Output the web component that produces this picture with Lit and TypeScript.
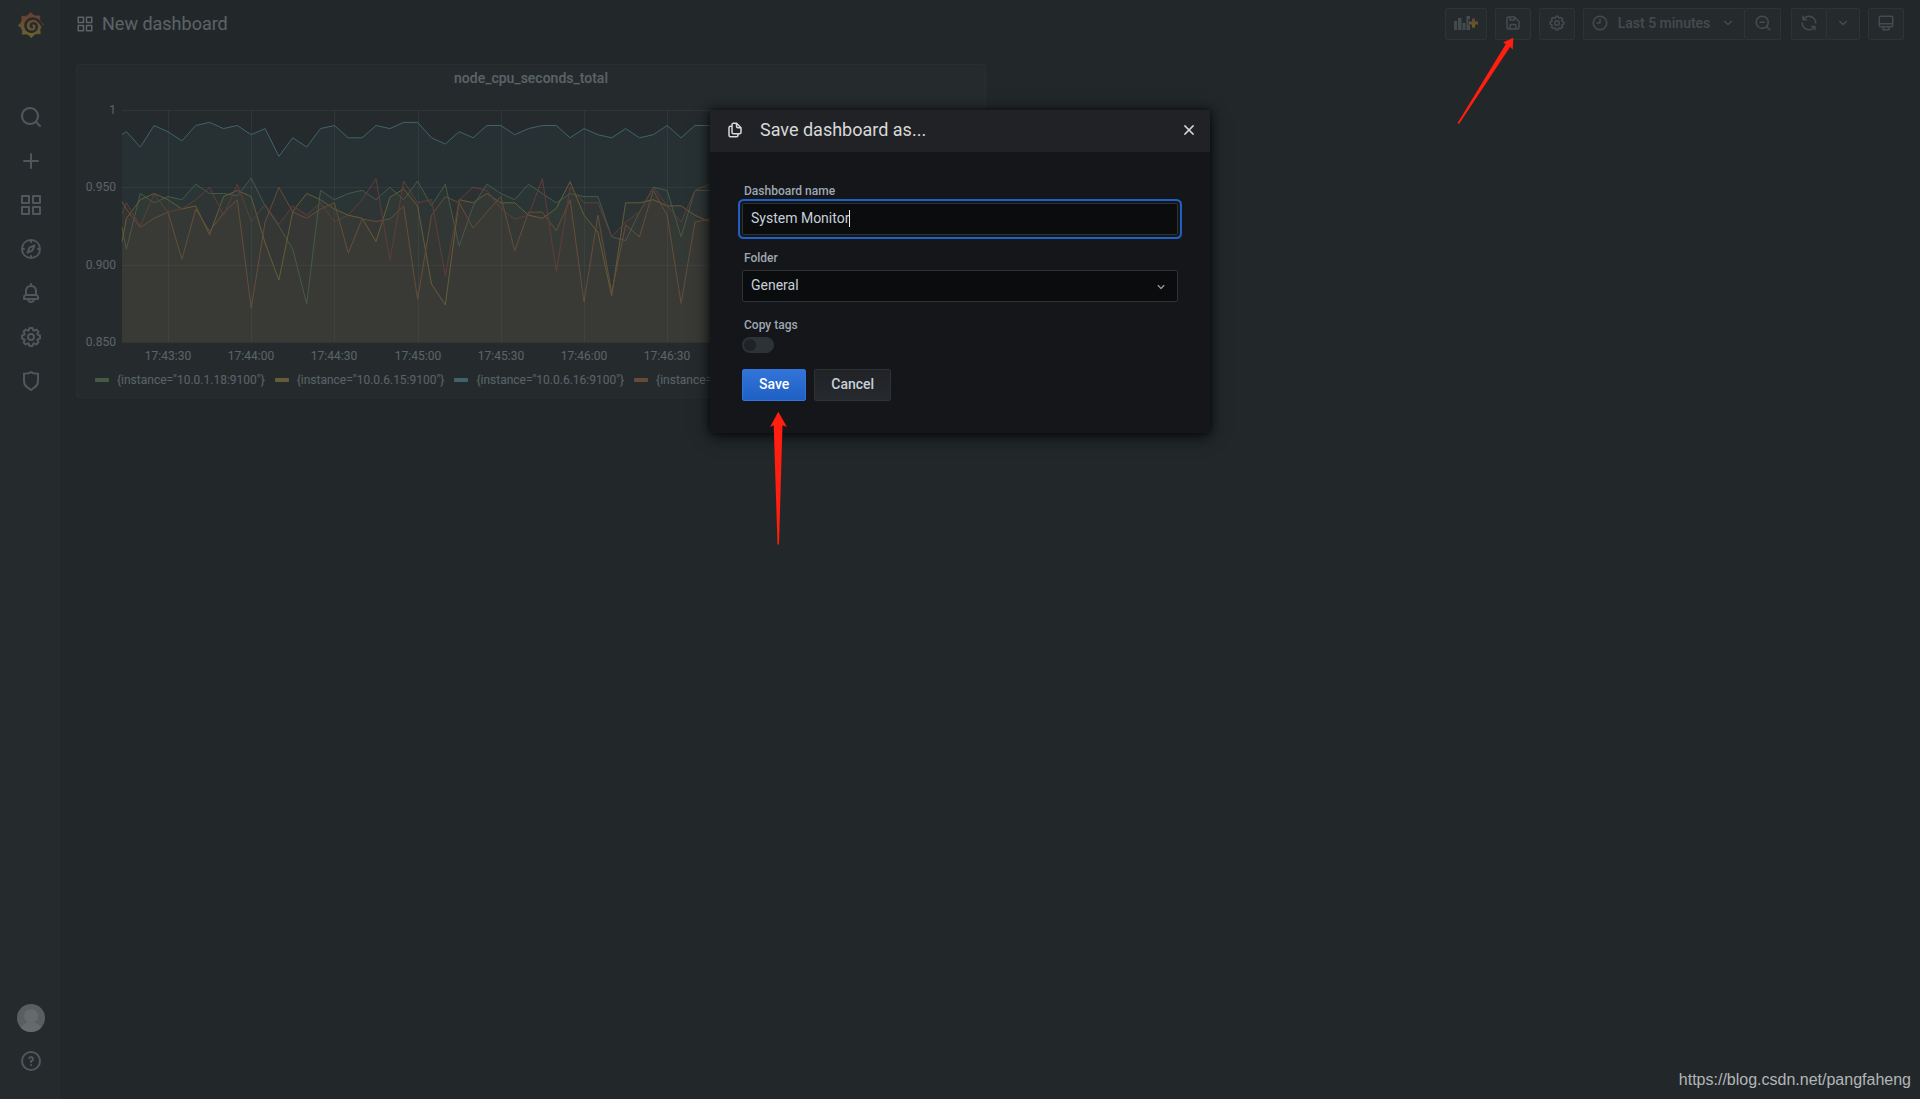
import { LitElement, html, css, svg } from "lit";
import { customElement, property, state } from "lit/decorators.js";

const ICONS: Record<string, string> = {
  search: "M21.71,20.29,18,16.61A9,9,0,1,0,16.61,18l3.68,3.68a1,1,0,0,0,1.42,0A1,1,0,0,0,21.71,20.29ZM11,18a7,7,0,1,1,7-7A7,7,0,0,1,11,18Z",
  "search-minus": "M21.71,20.29,18,16.61A9,9,0,1,0,16.61,18l3.68,3.68a1,1,0,0,0,1.42,0A1,1,0,0,0,21.71,20.29ZM11,18a7,7,0,1,1,7-7A7,7,0,0,1,11,18ZM14,10H8a1,1,0,0,0,0,2h6a1,1,0,0,0,0-2Z",
  plus: "M19,11H13V5a1,1,0,0,0-2,0v6H5a1,1,0,0,0,0,2h6v6a1,1,0,0,0,2,0V13h6a1,1,0,0,0,0-2Z",
  apps: "M10,13H3a1,1,0,0,0-1,1v7a1,1,0,0,0,1,1h7a1,1,0,0,0,1-1V14A1,1,0,0,0,10,13ZM9,20H4V15H9ZM21,2H14a1,1,0,0,0-1,1v7a1,1,0,0,0,1,1h7a1,1,0,0,0,1-1V3A1,1,0,0,0,21,2ZM20,9H15V4h5Zm1,4H14a1,1,0,0,0-1,1v7a1,1,0,0,0,1,1h7a1,1,0,0,0,1-1V14A1,1,0,0,0,21,13Zm-1,7H15V15h5ZM10,2H3A1,1,0,0,0,2,3v7a1,1,0,0,0,1,1h7a1,1,0,0,0,1-1V3A1,1,0,0,0,10,2ZM9,9H4V4H9Z",
  compass: "M12,2A10,10,0,1,0,22,12,10,10,0,0,0,12,2Zm1,17.93V19a1,1,0,0,0-2,0v.93A8,8,0,0,1,4.07,13H5a1,1,0,0,0,0-2H4.07A8,8,0,0,1,11,4.07V5a1,1,0,0,0,2,0V4.07A8,8,0,0,1,19.93,11H19a1,1,0,0,0,0,2h.93A8,8,0,0,1,13,19.93ZM15.14,7.55l-5,2.12a1,1,0,0,0-.52.52l-2.12,5a1,1,0,0,0,.21,1.1,1,1,0,0,0,.7.3.93.93,0,0,0,.4-.09l5-2.12a1,1,0,0,0,.52-.52l2.12-5a1,1,0,0,0-1.31-1.31Zm-2.49,5.1-2.28,1,1-2.28,2.28-1Z",
  bell: "M18,13.18V10a6,6,0,0,0-5-5.91V3a1,1,0,0,0-2,0V4.09A6,6,0,0,0,6,10v3.18A3,3,0,0,0,4,16v2a1,1,0,0,0,1,1H8.14a4,4,0,0,0,7.72,0H19a1,1,0,0,0,1-1V16A3,3,0,0,0,18,13.18ZM8,10a4,4,0,0,1,8,0v3H8Zm4,10a2,2,0,0,1-1.72-1h3.44A2,2,0,0,1,12,20Zm6-3H6V16a1,1,0,0,1,1-1H17a1,1,0,0,1,1,1Z",
  cog: "M21.32,9.55l-1.89-.63.89-1.78A1,1,0,0,0,20.13,6L18,3.87a1,1,0,0,0-1.15-.19l-1.78.89-.63-1.89A1,1,0,0,0,13.5,2h-3a1,1,0,0,0-.95.68L8.92,4.57,7.14,3.68A1,1,0,0,0,6,3.87L3.87,6a1,1,0,0,0-.19,1.15l.89,1.78-1.89.63A1,1,0,0,0,2,10.5v3a1,1,0,0,0,.68.95l1.89.63-.89,1.78A1,1,0,0,0,3.87,18L6,20.13a1,1,0,0,0,1.15.19l1.78-.89.63,1.89a1,1,0,0,0,.95.68h3a1,1,0,0,0,.95-.68l.63-1.89,1.78.89A1,1,0,0,0,18,20.13L20.13,18a1,1,0,0,0,.19-1.15l-.89-1.78,1.89-.63A1,1,0,0,0,22,13.5v-3A1,1,0,0,0,21.32,9.55ZM20,12.78l-1.2.4A2,2,0,0,0,17.64,16l.57,1.14-1.1,1.1L16,17.64a2,2,0,0,0-2.79,1.16l-.4,1.2H11.22l-.4-1.2A2,2,0,0,0,8,17.64l-1.14.57-1.1-1.1L6.36,16A2,2,0,0,0,5.2,13.18L4,12.78V11.22l1.2-.4A2,2,0,0,0,6.36,8L5.79,6.89l1.1-1.1L8,6.36A2,2,0,0,0,10.82,5.2l.4-1.2h1.56l.4,1.2A2,2,0,0,0,16,6.36l1.14-.57,1.1,1.1L17.64,8a2,2,0,0,0,1.16,2.79l1.2.4ZM12,8a4,4,0,1,0,4,4A4,4,0,0,0,12,8Zm0,6a2,2,0,1,1,2-2A2,2,0,0,1,12,14Z",
  shield: "M19.63,3.65a1,1,0,0,0-.84-.2,8,8,0,0,1-6.22-1.27,1,1,0,0,0-1.14,0A8,8,0,0,1,5.21,3.45a1,1,0,0,0-.84.2A1,1,0,0,0,4,4.43v7.45a9,9,0,0,0,3.77,7.33l3.65,2.6a1,1,0,0,0,1.16,0l3.65-2.6A9,9,0,0,0,20,11.88V4.43A1,1,0,0,0,19.63,3.65ZM18,11.88a7,7,0,0,1-2.93,5.7L12,19.77,8.93,17.58A7,7,0,0,1,6,11.88V5.58a10,10,0,0,0,6-1.39,10,10,0,0,0,6,1.39Z",
  help: "M11.29,15.29a1.58,1.58,0,0,0-.12.15.76.76,0,0,0-.09.18.64.64,0,0,0-.06.18,1.36,1.36,0,0,0,0,.2.84.84,0,0,0,.08.38.9.9,0,0,0,.54.54.94.94,0,0,0,.76,0,.9.9,0,0,0,.54-.54A1,1,0,0,0,13,16a1,1,0,0,0-.29-.71A1,1,0,0,0,11.29,15.29ZM12,2A10,10,0,1,0,22,12,10,10,0,0,0,12,2Zm0,18a8,8,0,1,1,8-8A8,8,0,0,1,12,20ZM12,7A3,3,0,0,0,9.4,8.5a1,1,0,1,0,1.73,1A1,1,0,0,1,12,9a1,1,0,0,1,0,2,1,1,0,0,0-1,1v1a1,1,0,0,0,2,0v-.18A3,3,0,0,0,12,7Z",
  save: "M20.71,9.29l-6-6a1,1,0,0,0-.32-.21A1.09,1.09,0,0,0,14,3H6A3,3,0,0,0,3,6V18a3,3,0,0,0,3,3H18a3,3,0,0,0,3-3V10A1,1,0,0,0,20.71,9.29ZM9,5h4V7H9Zm6,14H9V16a1,1,0,0,1,1-1h4a1,1,0,0,1,1,1Zm4-1a1,1,0,0,1-1,1H17V16a3,3,0,0,0-3-3H10a3,3,0,0,0-3,3v3H6a1,1,0,0,1-1-1V6A1,1,0,0,1,6,5H7V8A1,1,0,0,0,8,9h6a1,1,0,0,0,1-1V6.41l4,4Z",
  clock: "M12,2A10,10,0,1,0,22,12,10,10,0,0,0,12,2Zm0,18a8,8,0,1,1,8-8A8,8,0,0,1,12,20ZM12,6a1,1,0,0,0-1,1v4H8a1,1,0,0,0,0,2h4a1,1,0,0,0,1-1V7A1,1,0,0,0,12,6Z",
  down: "M17,9.17a1,1,0,0,0-1.41,0L12,12.71,8.46,9.17a1,1,0,0,0-1.41,0,1,1,0,0,0,0,1.42l4.24,4.24a1,1,0,0,0,1.42,0L17,10.59A1,1,0,0,0,17,9.17Z",
  sync: "M19.91,15.51H15.38a1,1,0,0,0,0,2h2.4A8,8,0,0,1,4,12a1,1,0,0,0-2,0,10,10,0,0,0,16.88,7.23V21a1,1,0,0,0,2,0V16.5A1,1,0,0,0,19.91,15.51ZM12,2A10,10,0,0,0,5.12,4.77V3a1,1,0,0,0-2,0V7.5a1,1,0,0,0,1,1h4.5a1,1,0,0,0,0-2H6.22A8,8,0,0,1,20,12a1,1,0,0,0,2,0A10,10,0,0,0,12,2Z",
  monitor: "M19,2H5A3,3,0,0,0,2,5V15a3,3,0,0,0,3,3H7.64l-.58,1a2,2,0,0,0,0,2,2,2,0,0,0,1.75,1h6.46A2,2,0,0,0,17,21a2,2,0,0,0,0-2l-.59-1H19a3,3,0,0,0,3-3V5A3,3,0,0,0,19,2ZM8.77,20,10,18H14l1.2,2ZM20,15a1,1,0,0,1-1,1H5a1,1,0,0,1-1-1V14H20Zm0-3H4V5A1,1,0,0,1,5,4H19a1,1,0,0,1,1,1Z",
  copy: "M21,8.94a1.31,1.31,0,0,0-.06-.27l0-.09a1.07,1.07,0,0,0-.19-.28h0l-6-6h0a1.07,1.07,0,0,0-.28-.19.32.32,0,0,0-.09,0A.88.88,0,0,0,14.05,2H10A3,3,0,0,0,7,5V6H6A3,3,0,0,0,3,9V19a3,3,0,0,0,3,3h8a3,3,0,0,0,3-3V18h1a3,3,0,0,0,3-3V9S21,9,21,8.94ZM15,5.41,17.59,8H16a1,1,0,0,1-1-1ZM15,19a1,1,0,0,1-1,1H6a1,1,0,0,1-1-1V9A1,1,0,0,1,6,8H7v7a3,3,0,0,0,3,3h5Zm4-4a1,1,0,0,1-1,1H10a1,1,0,0,1-1-1V5a1,1,0,0,1,1-1h3V7a3,3,0,0,0,3,3h3Z",
  times: "M13.41,12l6.3-6.29a1,1,0,1,0-1.42-1.42L12,10.59,5.71,4.29A1,1,0,0,0,4.29,5.71L10.59,12l-6.3,6.29a1,1,0,0,0,0,1.42,1,1,0,0,0,1.42,0L12,13.41l6.29,6.3a1,1,0,0,0,1.42,0,1,1,0,0,0,0-1.42Z",
};

const icon = (name: string, size: number) => html`<svg
  width=${size}
  height=${size}
  viewBox="0 0 24 24"
  fill="currentColor"
  aria-hidden="true"
><path d=${ICONS[name]}></path></svg>`;

/* ---------- graph panel ---------- */

interface Series {
  label: string;
  color: string;
  values: number[];
}

/* One sample every five seconds, in thousandths. */
const SERIES: Series[] = [
  {
    label: '{instance="10.0.1.18:9100"}',
    color: "#7eb26d",
    values: [924, 910, 946, 940, 944, 942, 952, 946, 946, 944.6, 956, 938, 925, 910, 874.6, 948, 942, 946, 948, 942, 950, 942, 954, 938, 952, 912, 938, 952, 946, 942, 952, 946, 940, 946, 944, 944, 918, 915.5, 934, 950, 948, 918, 948, 948, 948],
  },
  {
    label: '{instance="10.0.6.15:9100"}',
    color: "#eab839",
    values: [915, 930, 942, 946, 942, 936, 938, 919.4, 944, 948, 944, 914, 890, 934.5, 946, 942, 936, 932, 930, 915, 943.5, 949, 938, 887.5, 874, 942, 940, 946, 940, 940, 932, 930, 936.4, 953.7, 932, 921, 880, 940, 940, 942, 938, 938, 932, 928, 926],
  },
  {
    label: '{instance="10.0.6.16:9100"}',
    color: "#6ed0e0",
    values: [984, 986, 976, 990, 986, 980, 990, 992, 988, 990, 984, 988, 970, 982, 976, 988, 990, 982, 982, 990, 988, 992, 992, 982, 978, 986, 982, 990, 990, 984, 988, 990, 990, 982, 988, 984, 982, 988, 982, 984, 990, 982, 990, 990, 990],
  },
  {
    label: '{instance="10.0.6.17:9100"}',
    color: "#ef843c",
    values: [941, 936, 924, 930, 934, 903.5, 936, 921.6, 933.4, 942, 872, 927.6, 950, 934, 930, 936, 940, 907.5, 929.5, 928, 929.5, 938, 877.6, 932, 944, 940, 923.7, 934, 944, 909, 934, 934, 922, 942, 876, 932, 882, 925.7, 918, 948, 932, 875, 927.6, 929.5, 929],
  },
  {
    label: '{instance="10.0.6.18:9100"}',
    color: "#e24d42",
    values: [933, 940, 925, 945.7, 934, 936, 942, 950, 932, 952, 928, 939, 926, 938, 932, 940, 928, 932, 942, 955.6, 903, 954, 940, 942, 893, 942, 950, 948, 936.4, 929.5, 932, 955.6, 895.7, 950, 940, 940, 918, 927.6, 934, 950, 938, 927.6, 948, 952, 952],
  },
];

const PLOT = { left: 45, top: 10, height: 232, firstTick: 91, tick: 83.2 };
const Y_LABELS = ["1", "0.950", "0.900", "0.850"];
const X_LABELS = ["17:43:30", "17:44:00", "17:44:30", "17:45:00", "17:45:30", "17:46:00", "17:46:30", "17:47:00", "17:47:30", "17:48:00"];

const xAt = (i: number) => (i === 0 ? PLOT.left : PLOT.firstTick + ((i - 4) * PLOT.tick) / 6);
const yAt = (v: number) => PLOT.top + ((1000 - v) / 150) * PLOT.height;

@customElement("graph-panel")
class GraphPanel extends LitElement {
  static styles = css`
    :host {
      display: flex;
      flex-direction: column;
      box-sizing: border-box;
      min-width: 0;
      overflow: hidden;
      background: #141619;
      border: 1px solid #202226;
      border-radius: 3px;
      color: #c7d0d9;
    }
    .title {
      margin: 0;
      font-size: 14px;
      line-height: 26px;
      font-weight: 500;
      text-align: center;
    }
    .graph {
      display: block;
      width: 100%;
      height: 273px;
      margin-top: 9px;
    }
    .graph text {
      font-size: 12px;
      fill: #c7d0d9;
    }
    .legend {
      display: flex;
      gap: 10px;
      margin: 0;
      padding: 0 0 0 18px;
      list-style: none;
      font-size: 12px;
      line-height: 14px;
      white-space: nowrap;
    }
    .legend li {
      display: flex;
      flex: none;
      align-items: center;
      gap: 8px;
    }
    .swatch {
      width: 14px;
      height: 4px;
      border-radius: 1px;
    }
  `;

  render() {
    const base = PLOT.top + PLOT.height;
    const lines = SERIES.map((s) => s.values.map((v, i) => `${xAt(i).toFixed(1)},${yAt(v).toFixed(1)}`).join(" "));
    const end = xAt(SERIES[0].values.length - 1);
    return html`
      <h2 class="title">node_cpu_seconds_total</h2>
      <svg class="graph" role="img" aria-label="node_cpu_seconds_total">
        ${SERIES.map(
          (s, n) => svg`<polygon points="${PLOT.left},${base} ${lines[n]} ${end},${base}" fill=${s.color} fill-opacity="0.1"></polygon>`
        )}
        ${SERIES.map(
          (s, n) => svg`<polyline points=${lines[n]} fill="none" stroke=${s.color} stroke-width="1"></polyline>`
        )}
        ${Y_LABELS.map((label, i) => {
          const y = Math.round(yAt(1000 - i * 50));
          return svg`
            <rect x=${PLOT.left} y=${y} width="880" height="1" fill="#c8c8c8" fill-opacity="0.2"></rect>
            <text x="39" y=${y + 4} text-anchor="end">${label}</text>`;
        })}
        ${X_LABELS.map((label, i) => {
          const x = Math.round(PLOT.firstTick + i * PLOT.tick);
          return svg`
            <rect x=${x} y=${PLOT.top} width="1" height=${PLOT.height} fill="#c8c8c8" fill-opacity="0.2"></rect>
            <text x=${x} y="260" text-anchor="middle">${label}</text>`;
        })}
      </svg>
      <ul class="legend">
        ${SERIES.map((s) => html`<li><span class="swatch" style="background:${s.color}"></span>${s.label}</li>`)}
      </ul>
    `;
  }
}

/* ---------- side menu ---------- */

const MENU = [
  ["search", "Search"],
  ["plus", "Create"],
  ["apps", "Dashboards"],
  ["compass", "Explore"],
  ["bell", "Alerting"],
  ["cog", "Configuration"],
  ["shield", "Server Admin"],
];

/* Outline of the eight-toothed logo wheel. */
const wheel = () => {
  const pts: string[] = [];
  for (let i = 0; i < 8; i++) {
    const a = (i * Math.PI) / 4 - 1.6;
    const at = (r: number, d: number) => `${(13 + r * Math.cos(a + d)).toFixed(2)},${(13 + r * Math.sin(a + d)).toFixed(2)}`;
    pts.push(at(12.8, 0), at(10.2, 0.26), at(10.2, 0.52));
  }
  return pts.join(" ");
};

@customElement("side-menu")
class SideMenu extends LitElement {
  static styles = css`
    :host {
      display: flex;
      flex-direction: column;
      align-items: center;
      box-sizing: border-box;
      width: 60px;
      padding: 12px 0 17px 2px;
      background: #141619;
      box-shadow: 0 0 20px #0b0c0e;
      color: #9fa7b3;
    }
    .logo {
      height: 26px;
      margin-bottom: 57px;
    }
    nav {
      display: flex;
      flex-direction: column;
    }
    .grow {
      flex: 1;
    }
    a {
      display: grid;
      place-items: center;
      height: 44px;
      color: inherit;
    }
    .help {
      height: 42px;
    }
    svg {
      display: block;
    }
  `;

  render() {
    return html`
      <a class="logo" href="#home" aria-label="Home">
        <svg width="26" height="26" viewBox="0 0 26 26" aria-hidden="true">
          <defs>
            <linearGradient id="flame" x1="0" y1="1" x2="0" y2="0">
              <stop offset="0" stop-color="#fcd61f"></stop>
              <stop offset="1" stop-color="#f1502a"></stop>
            </linearGradient>
          </defs>
          <polygon points=${wheel()} fill="url(#flame)" stroke="url(#flame)" stroke-width="0.6" stroke-linejoin="round"></polygon>
          <path
            d="M26 16C22.500 13 21.800 6.400 15 6.400C9.800 6.400 7 10.500 7.500 14.500C8 18.300 11.500 20.400 15 19.600C17.900 18.900 19.300 16.300 18.700 13.900C18 11.300 15.300 10.500 13.600 11.900C12.400 12.900 12.600 14.700 14 15.200"
            fill="none"
            stroke="#141619"
            stroke-width="2.500"
            stroke-linecap="round"
          ></path>
        </svg>
      </a>
      <nav aria-label="Main">
        ${MENU.map(([name, label]) => html`<a href="#${name}" aria-label=${label}>${icon(name, 24)}</a>`)}
      </nav>
      <div class="grow"></div>
      <a href="#profile" aria-label="Profile">
        <svg width="28" height="28" viewBox="0 0 28 28" aria-hidden="true">
          <clipPath id="disc"><circle cx="14" cy="14" r="14"></circle></clipPath>
          <g clip-path="url(#disc)">
            <rect width="28" height="28" fill="#c0c3c6"></rect>
            <circle cx="14" cy="12" r="7" fill="#e6e9ec"></circle>
            <ellipse cx="14" cy="27" rx="11" ry="9" fill="#e6e9ec"></ellipse>
          </g>
        </svg>
      </a>
      <a class="help" href="#help" aria-label="Help">${icon("help", 24)}</a>
    `;
  }
}

/* ---------- top toolbar ---------- */

@customElement("dash-toolbar")
class DashToolbar extends LitElement {
  static styles = css`
    :host {
      display: flex;
      align-items: center;
      gap: 8px;
      height: 48px;
      color: #c7d0d9;
    }
    .name {
      display: flex;
      align-items: center;
      gap: 8px;
      flex: 1;
      margin: 0;
      font-size: 18px;
      line-height: 24px;
      font-weight: 400;
    }
    svg {
      display: block;
    }
    button {
      display: flex;
      align-items: center;
      justify-content: center;
      box-sizing: border-box;
      width: 36px;
      height: 32px;
      padding: 0 0 2px;
      border: 1px solid #2c3235;
      border-radius: 2px;
      background: #141619;
      color: #7b8087;
      font: 500 14px/20px Roboto, sans-serif;
    }
    .add {
      width: 42px;
    }
    .group {
      display: flex;
    }
    .group button + button {
      border-left: 0;
      border-radius: 0 2px 2px 0;
    }
    .range {
      width: 162px;
      gap: 9px;
    }
    .group .narrow {
      width: 33px;
    }
    .refresh {
      margin-left: 2px;
    }
  `;

  render() {
    return html`
      <h1 class="name">${icon("apps", 18)}New dashboard</h1>
      <button class="add" aria-label="Add panel">
        <svg width="26" height="16" viewBox="0 0 26 16" aria-hidden="true">
          <defs>
            <linearGradient id="warm" x1="0" y1="0" x2="0" y2="1">
              <stop offset="0" stop-color="#f05a28"></stop>
              <stop offset="1" stop-color="#fbca0a"></stop>
            </linearGradient>
          </defs>
          <path d="M1 6h3v9h-3zM5 3h3.500v12h-3.500zM9.500 8h3v7h-3zM13.500 1h3.500v3h-1.500v6h1.500v5h-3.500z" fill="currentColor"></path>
          <path d="M19 3.500h3v3h3v3h-3v3h-3v-3h-3v-3h3z" fill="url(#warm)"></path>
        </svg>
      </button>
      <button aria-label="Save dashboard">${icon("save", 18)}</button>
      <button aria-label="Dashboard settings">${icon("cog", 18)}</button>
      <div class="group">
        <button class="range">${icon("clock", 18)}<span>Last 5 minutes</span>${icon("down", 18)}</button>
        <button aria-label="Zoom out">${icon("search-minus", 18)}</button>
      </div>
      <div class="group refresh">
        <button aria-label="Refresh">${icon("sync", 18)}</button>
        <button class="narrow" aria-label="Refresh interval">${icon("down", 18)}</button>
      </div>
      <button aria-label="Cycle view mode">${icon("monitor", 18)}</button>
    `;
  }
}

/* ---------- save dialog ---------- */

@customElement("save-dialog")
class SaveDialog extends LitElement {
  @property() name = "System Monitor";
  @state() private copyTags = false;

  static styles = css`
    :host {
      display: block;
      background: #141619;
      box-shadow: 0 3px 16px #000000c0, 0 0 6px #00000080;
      color: #c7d0d9;
    }
    header {
      display: flex;
      align-items: center;
      box-sizing: border-box;
      height: 42px;
      padding: 0 14px 2px 16px;
      background: #202226;
      color: #d8d9da;
    }
    h2 {
      flex: 1;
      margin: 0 0 0 16px;
      font-size: 18px;
      line-height: 24px;
      font-weight: 400;
    }
    svg {
      display: block;
    }
    .close {
      padding: 0;
      border: 0;
      background: none;
      color: inherit;
    }
    .close svg {
      stroke: currentColor;
    }
    form {
      display: flex;
      flex-direction: column;
      gap: 16px;
      padding: 32px;
    }
    .field label {
      display: block;
      padding: 0 0 4px 2px;
      font-size: 12px;
      line-height: 15px;
      font-weight: 500;
      color: #9fa7b3;
    }
    .control {
      position: relative;
      display: grid;
    }
    .control input,
    .control select {
      appearance: none;
      box-sizing: border-box;
      width: 100%;
      height: 32px;
      margin: 0;
      padding: 0 8px 2px;
      border: 1px solid #2c3235;
      border-radius: 2px;
      outline: none;
      background: #0b0c0e;
      color: #c7d0d9;
      font: 400 14px/20px Roboto, sans-serif;
    }
    .control input {
      caret-color: transparent;
      box-shadow: 0 0 0 2px #141619, 0 0 0 4px #1f60c4;
    }
    .caret {
      position: absolute;
      left: 107px;
      top: 7px;
      width: 1px;
      height: 17px;
      background: #e9edf2;
    }
    .chevron {
      position: absolute;
      right: 9px;
      top: 9px;
      color: #8e959e;
      pointer-events: none;
    }
    .switch {
      appearance: none;
      display: block;
      box-sizing: border-box;
      width: 32px;
      height: 16px;
      margin: 0;
      padding: 2px;
      border-radius: 8px;
      background: #2c3235;
    }
    .switch::before {
      content: "";
      display: block;
      width: 12px;
      height: 12px;
      border-radius: 6px;
      background: #202226;
    }
    .switch:checked::before {
      margin-left: auto;
    }
    .actions {
      display: flex;
      gap: 8px;
    }
    .actions button {
      box-sizing: border-box;
      height: 32px;
      padding: 0 16px 2px;
      border: 1px solid #2c3235;
      border-radius: 2px;
      background: linear-gradient(#202226, #26292d);
      color: #c7d0d9;
      font: 500 14px/20px Roboto, sans-serif;
    }
    .actions .primary {
      border-color: #3274d9;
      background: linear-gradient(#3274d9, #1f60c4);
      color: #ffffff;
    }
  `;

  render() {
    return html`
      <header>
        ${icon("copy", 18)}
        <h2>Save dashboard as...</h2>
        <button class="close" aria-label="Close">${icon("times", 14)}</button>
      </header>
      <form @submit=${(e: Event) => e.preventDefault()}>
        <div class="field">
          <label for="name">Dashboard name</label>
          <div class="control">
            <input id="name" type="text" .value=${this.name} @input=${(e: Event) => (this.name = (e.target as HTMLInputElement).value)} />
            <span class="caret"></span>
          </div>
        </div>
        <div class="field">
          <label for="folder">Folder</label>
          <div class="control">
            <select id="folder"><option>General</option></select>
            <span class="chevron">${icon("down", 16)}</span>
          </div>
        </div>
        <div class="field">
          <label for="tags">Copy tags</label>
          <input
            class="switch"
            id="tags"
            type="checkbox"
            role="switch"
            .checked=${this.copyTags}
            @change=${(e: Event) => (this.copyTags = (e.target as HTMLInputElement).checked)}
          />
        </div>
        <div class="actions">
          <button class="primary" type="submit">Save</button>
          <button type="button">Cancel</button>
        </div>
      </form>
    `;
  }
}

/* ---------- page ---------- */

@customElement("app-root")
class AppRoot extends LitElement {
  static styles = css`
    :host {
      position: relative;
      display: flex;
      min-height: 100vh;
      overflow: hidden;
      background: #0b0c0e;
      font-family: Roboto, sans-serif;
    }
    main {
      flex: 1;
      min-width: 0;
      padding: 0 16px;
    }
    .grid {
      display: grid;
      grid-template-columns: 1fr 1fr;
      gap: 8px;
      margin-top: 16px;
    }
    .panel {
      height: 334px;
    }
    .backdrop {
      position: absolute;
      inset: 0;
      background: #2c3436;
      opacity: 0.7;
    }
    .modal {
      position: absolute;
      top: 10vh;
      left: 0;
      right: 0;
      width: 500px;
      margin: 0 auto;
    }
    .arrow {
      position: absolute;
      fill: #ff1e10;
    }
    .to-save {
      left: 59px;
      top: 301px;
    }
    .to-toolbar {
      right: 404px;
      top: 37px;
    }
    .credit {
      position: absolute;
      right: 9px;
      bottom: 9px;
      color: #b3b6b8;
      font: 16px/20px "Liberation Sans", sans-serif;
    }
  `;

  render() {
    return html`
      <side-menu></side-menu>
      <main>
        <dash-toolbar></dash-toolbar>
        <div class="grid"><graph-panel class="panel"></graph-panel></div>
      </main>
      <div class="backdrop"></div>
      <div class="modal">
        <save-dialog></save-dialog>
        <svg class="arrow to-save" width="19" height="135" viewBox="0 0 19 135" aria-hidden="true">
          <path d="M9.300 0.700L18 16L13.500 14.300L10 133.500H8.500L4.700 14.300L1 16Z"></path>
        </svg>
      </div>
      <svg class="arrow to-toolbar" width="59" height="88" viewBox="0 0 59 88" aria-hidden="true">
        <path d="M56.300 0.700L55.700 12.700L53.200 9.800L2 87L0.600 86L48.700 7.200L46.300 5.300Z"></path>
      </svg>
      <div class="credit">https://blog.csdn.net/pangfaheng</div>
    `;
  }
}
